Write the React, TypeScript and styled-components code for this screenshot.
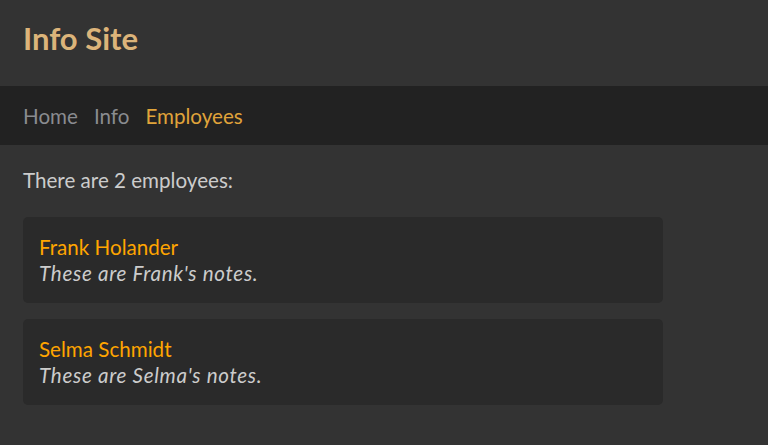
import React from "react";
import styled, { createGlobalStyle } from "styled-components";

const Global = createGlobalStyle`
  html, body { margin: 0; padding: 0; background: #333333; }
  body { font-family: "Lato", "Open Sans", sans-serif; }
`;

const Header = styled.header`
  background: #333333;
  height: 86px;
  display: flex;
  align-items: center;
  padding: 0 23px 10px;
  box-sizing: border-box;
`;

const Title = styled.h1`
  margin: 0;
  font-size: 31px;
  font-weight: 700;
  color: #dcb47a;
`;

const Nav = styled.nav`
  background: #222222;
  height: 59px;
  display: flex;
  align-items: center;
  gap: 16px;
  padding: 0 23px;
  box-sizing: border-box;
`;

const NavLink = styled.a<{ $active?: boolean }>`
  font-size: 20.6px;
  color: ${(p) => (p.$active ? "#e0a43a" : "#8a8c90")};
  text-decoration: none;
`;

const Main = styled.main`
  padding: 22px 23px;
  display: flex;
  flex-direction: column;
  gap: 16px;
`;

const Intro = styled.p`
  margin: 0 0 8px;
  font-size: 20.6px;
  color: #cccccc;
  line-height: 26px;
`;

const Card = styled.div`
  width: 640px;
  height: 86px;
  box-sizing: border-box;
  background: #2a2a2a;
  border-radius: 5px;
  padding: 17px 16px;
  display: flex;
  flex-direction: column;
`;

const Name = styled.div`
  font-size: 20.6px;
  line-height: 26px;
  color: #ffa500;
`;

const Notes = styled.div`
  font-size: 20.6px;
  line-height: 26px;
  font-style: italic;
  letter-spacing: 0.7px;
  color: #cccccc;
`;

const employees = [
  { name: "Frank Holander", notes: "These are Frank's notes." },
  { name: "Selma Schmidt", notes: "These are Selma's notes." },
];

export default function App() {
  return (
    <>
      <Global />
      <Header>
        <Title>Info Site</Title>
      </Header>
      <Nav>
        <NavLink href="#">Home</NavLink>
        <NavLink href="#">Info</NavLink>
        <NavLink href="#" $active>
          Employees
        </NavLink>
      </Nav>
      <Main>
        <Intro>There are 2 employees:</Intro>
        {employees.map((e) => (
          <Card key={e.name}>
            <Name>{e.name}</Name>
            <Notes>{e.notes}</Notes>
          </Card>
        ))}
      </Main>
    </>
  );
}
